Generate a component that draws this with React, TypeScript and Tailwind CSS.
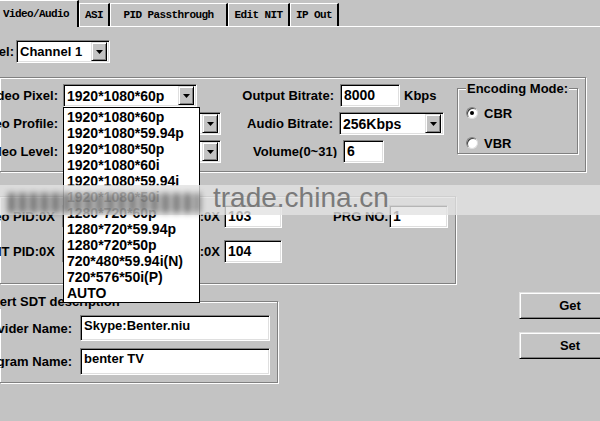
import React from "react";

const sunken =
  "bg-white border border-t-[#808080] border-l-[#808080] border-r-white border-b-white shadow-[inset_1px_1px_0_#000,inset_-1px_-1px_0_#dfdfdf]";
const raised =
  "bg-[#c3c3c3] border border-t-[#dfdfdf] border-l-[#dfdfdf] border-r-black border-b-black shadow-[inset_1px_1px_0_#fff,inset_-1px_-1px_0_#808080]";
const etched = "border border-[#808080] shadow-[inset_1px_1px_0_#fff,1px_1px_0_#fff]";

function Arrow() {
  return (
    <svg width="7" height="4" viewBox="0 0 7 4">
      <path d="M0 0h7L3.5 4z" fill="#000" />
    </svg>
  );
}

function Combo({ className, value, textClass }: { className: string; value: string; textClass?: string }) {
  return (
    <div className={`${sunken} flex items-center pr-[2px] ${className}`}>
      <span className={`flex-1 pl-[3px] whitespace-nowrap overflow-hidden ${textClass ?? "text-[14px]"}`}>{value}</span>
      <div className={`${raised} w-[16px] h-[19px] flex items-center justify-center shrink-0`}>
        <Arrow />
      </div>
    </div>
  );
}

function Label({ className, children }: { className: string; children: React.ReactNode }) {
  return (
    <div className={`flex justify-end overflow-hidden whitespace-nowrap shrink-0 ${className}`}>
      <span className="shrink-0">{children}</span>
    </div>
  );
}

function Field({ className, value, textClass }: { className: string; value: string; textClass?: string }) {
  return (
    <div className={`${sunken} shrink-0 flex items-start pt-[3px] pl-[3px] whitespace-nowrap overflow-hidden ${textClass ?? "text-[14px]"} ${className}`}>
      {value}
    </div>
  );
}

const tabText = "font-['Liberation_Mono',monospace] text-[11px] tracking-[-0.6px]";

export default function App() {
  const items = [
    "1920*1080*60p",
    "1920*1080*59.94p",
    "1920*1080*50p",
    "1920*1080*60i",
    "1920*1080*59.94i",
    "1920*1080*50i",
    "1280*720*60p",
    "1280*720*59.94p",
    "1280*720*50p",
    "720*480*59.94i(N)",
    "720*576*50i(P)",
    "AUTO",
  ];
  return (
    <div className="relative w-[600px] h-[421px] overflow-hidden bg-[#c3c3c3] text-black font-bold text-[13px] leading-none font-['Liberation_Sans',Arial,sans-serif]">
      {/* Tabs */}
      <div className="flex h-[27px]">
        <div className={`w-[79px] h-[27px] border-t border-white border-r-2 border-r-black flex items-center pl-[3px] ${tabText}`}>
          Video/Audio
        </div>
        <div className="flex-1 flex flex-col">
          <div className="flex items-end h-[26px]">
            <div className={`w-[31px] h-[23px] border-t border-l border-white border-r-2 border-r-black flex items-center justify-center ${tabText}`}>ASI</div>
            <div className={`w-[118px] h-[23px] border-t border-l border-white border-r-2 border-r-black flex items-center justify-center ${tabText}`}>PID Passthrough</div>
            <div className={`w-[62px] h-[23px] border-t border-l border-white border-r-2 border-r-black flex items-center justify-center ${tabText}`}>Edit NIT</div>
            <div className={`w-[49px] h-[23px] border-t border-l border-white border-r-2 border-r-black flex items-center justify-center ${tabText}`}>IP Out</div>
          </div>
          <div className="h-px bg-white" />
        </div>
      </div>

      {/* Channel */}
      <div className="mt-[13px] flex items-center h-[23px]">
        <Label className="w-[14px]">Channel:</Label>
        <Combo className="ml-[2px] w-[94px] h-[23px]" value="Channel 1" textClass="text-[13px]" />
      </div>

      {/* Video / audio group */}
      <div className={`mt-[14px] ${etched} border-l-0 w-[586px] h-[95px] flex pt-[6px]`}>
        <div className="flex flex-col gap-[5px] w-[221px] shrink-0">
          <div className="flex items-center h-[23px]">
            <Label className="w-[58px]">Video Pixel:</Label>
            <Combo className="ml-[5px] w-[134px] h-[23px]" value="1920*1080*60p" />
          </div>
          <div className="flex items-center h-[23px]">
            <Label className="w-[58px]">Video Profile:</Label>
            <Combo className="ml-[5px] w-[158px] h-[23px]" value="High" />
          </div>
          <div className="flex items-center h-[23px]">
            <Label className="w-[58px]">Video Level:</Label>
            <Combo className="ml-[5px] w-[158px] h-[23px]" value="4.1" />
          </div>
        </div>
        <div className="flex flex-col gap-[5px] w-[236px] shrink-0">
          <div className="flex items-center h-[23px]">
            <Label className="w-[113px]">Output Bitrate:</Label>
            <Field className="ml-[6px] w-[60px] h-[23px]" value="8000" />
            <span className="ml-[4px]">Kbps</span>
          </div>
          <div className="flex items-center h-[23px]">
            <Label className="w-[112px]">Audio Bitrate:</Label>
            <Combo className="ml-[6px] w-[105px] h-[23px]" value="256Kbps" />
          </div>
          <div className="flex items-center h-[23px]">
            <Label className="w-[116px]">Volume(0~31)</Label>
            <Field className="ml-[6px] w-[41px] h-[23px]" value="6" />
          </div>
        </div>
        <div className={`relative mt-[4px] w-[121px] h-[66px] ${etched} shrink-0`}>
          <span className="absolute -top-[8px] left-[8px] px-[1px] bg-[#c3c3c3] leading-[15px]">Encoding Mode:</span>
          <div className="flex flex-col pl-[8px] pt-[16px] gap-[14px]">
            <div className="flex items-center h-[16px]">
              <div className="w-[12px] h-[12px] rounded-full bg-white border border-t-[#808080] border-l-[#808080] border-r-[#dfdfdf] border-b-[#dfdfdf] shadow-[inset_1px_1px_0_#404040] flex items-center justify-center">
                <div className="w-[4px] h-[4px] rounded-full bg-black" />
              </div>
              <span className="ml-[6px]">CBR</span>
            </div>
            <div className="flex items-center h-[16px]">
              <div className="w-[12px] h-[12px] rounded-full bg-white border border-t-[#808080] border-l-[#808080] border-r-[#dfdfdf] border-b-[#dfdfdf] shadow-[inset_1px_1px_0_#404040]" />
              <span className="ml-[6px]">VBR</span>
            </div>
          </div>
        </div>
      </div>

      {/* PID group */}
      <div className={`mt-[24px] ${etched} border-l-0 w-[456px] h-[88px] pt-[8px] flex flex-col gap-[12px]`}>
        <div className="flex items-center h-[23px]">
          <Label className="w-[55px]">Video PID:0X</Label>
          <Field className="ml-[7px] w-[80px] h-[23px]" value="100" />
          <Label className="w-[78px]">Audio PID:0X</Label>
          <Field className="ml-[4px] w-[58px] h-[23px]" value="103" />
          <Label className="w-[106px]">PRG NO.</Label>
          <Field className="ml-[1px] w-[59px] h-[23px]" value="1" />
        </div>
        <div className="flex items-center h-[23px]">
          <Label className="w-[55px]">PMT PID:0X</Label>
          <Field className="ml-[7px] w-[80px] h-[23px]" value="101" />
          <Label className="w-[78px]">PCR PID:0X</Label>
          <Field className="ml-[4px] w-[58px] h-[23px]" value="104" />
        </div>
      </div>

      {/* Bottom */}
      <div className="mt-[8px] flex items-start">
        <div className={`relative mt-[9px] ${etched} border-l-0 w-[278px] h-[82px] shrink-0 pt-[13px] flex flex-col gap-[7px]`}>
          <span className="absolute -top-[8px] -left-[19px] pr-[2px] bg-[#c3c3c3] leading-[15px] whitespace-nowrap">Insert SDT description</span>
          <div className="flex items-center h-[26px]">
            <Label className="w-[72px]">Provider Name:</Label>
            <Field className="ml-[8px] w-[190px] h-[26px]" value="Skype:Benter.niu" textClass="text-[13px]" />
          </div>
          <div className="flex items-center h-[27px]">
            <Label className="w-[72px]">Program Name:</Label>
            <Field className="ml-[8px] w-[190px] h-[27px]" value="benter TV" textClass="text-[13px]" />
          </div>
        </div>
        <div className="ml-[241px] flex flex-col gap-[13px] shrink-0">
          <div className={`${raised} w-[102px] h-[27px] flex items-center justify-center`}>Get</div>
          <div className={`${raised} w-[102px] h-[27px] flex items-center justify-center`}>Set</div>
        </div>
      </div>

      {/* Open dropdown list */}
      <div className="absolute left-[63px] top-[107px] w-[137px] bg-white border border-black pt-[1px] pb-[1px] pl-[3px] text-[14px] leading-[16px]">
        {items.map((t) => (
          <div key={t} className="whitespace-nowrap">{t}</div>
        ))}
      </div>

      {/* Watermark */}
      <div className="absolute left-0 top-[185px] w-[600px] h-[30px] bg-[#e2e2e2]/80" />
      <div className="absolute left-[8px] top-[193px] w-[192px] h-[20px] bg-[repeating-linear-gradient(90deg,#4a4a4a_0_7px,transparent_7px_11px)] blur-[3px] opacity-80" />
      <div className="absolute left-[213px] top-[182px] text-[28px] leading-[32px] font-normal text-[#7a7a7a] whitespace-nowrap">
        trade.china.cn
      </div>
    </div>
  );
}
